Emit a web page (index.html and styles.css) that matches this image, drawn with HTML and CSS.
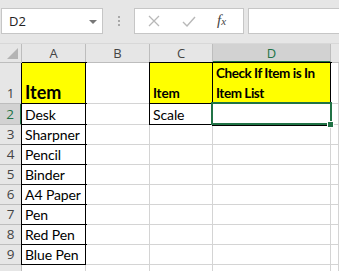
FILE: index.html
```html
<!DOCTYPE html>
<html>
<head>
<meta charset="utf-8">
<link rel="stylesheet" href="styles.css">
</head>
<body>
<div class="app">
  <div class="toolbar">
    <div class="namebox"><span class="ref">D2</span><span class="drop"></span></div>
    <div class="dots"><i></i><i></i><i></i></div>
    <div class="fbtns">
      <svg class="ico-x" width="12" height="12" viewBox="0 0 12 12"><path d="M1 1L11 11M11 1L1 11" stroke="#b8b8b8" stroke-width="1.3" fill="none"/></svg>
      <svg class="ico-ok" width="14" height="11" viewBox="0 0 14 11"><path d="M1 6L5 10L13 1" stroke="#b8b8b8" stroke-width="1.4" fill="none"/></svg>
      <span class="fx">f<span class="fxx">x</span></span>
    </div>
    <div class="formula"></div>
  </div>
  <div class="sheet">
    <div class="corner"><span class="tri"></span></div>
    <div class="ch">A</div>
    <div class="ch">B</div>
    <div class="ch">C</div>
    <div class="ch sel">D</div>
    <div class="ch last"></div>

    <div class="rh">1</div>
    <div class="c y b big">Item</div>
    <div class="c"></div>
    <div class="c y b hd">Item</div>
    <div class="c y b hd wrap">Check If Item is In Item List</div>
    <div class="c"></div>

    <div class="rh sel">2</div>
    <div class="c b">Desk</div>
    <div class="c"></div>
    <div class="c b">Scale</div>
    <div class="c b active"><span class="handle"></span></div>
    <div class="c"></div>

    <div class="rh">3</div><div class="c b">Sharpner</div><div class="c"></div><div class="c"></div><div class="c"></div><div class="c"></div>
    <div class="rh">4</div><div class="c b">Pencil</div><div class="c"></div><div class="c"></div><div class="c"></div><div class="c"></div>
    <div class="rh">5</div><div class="c b">Binder</div><div class="c"></div><div class="c"></div><div class="c"></div><div class="c"></div>
    <div class="rh">6</div><div class="c b">A4 Paper</div><div class="c"></div><div class="c"></div><div class="c"></div><div class="c"></div>
    <div class="rh">7</div><div class="c b">Pen</div><div class="c"></div><div class="c"></div><div class="c"></div><div class="c"></div>
    <div class="rh">8</div><div class="c b">Red Pen</div><div class="c"></div><div class="c"></div><div class="c"></div><div class="c"></div>
    <div class="rh">9</div><div class="c b">Blue Pen</div><div class="c"></div><div class="c"></div><div class="c"></div><div class="c"></div>
    <div class="rh"></div><div class="c"></div><div class="c"></div><div class="c"></div><div class="c"></div><div class="c"></div>
  </div>
</div>
</body>
</html>
```

FILE: styles.css
```css
* { box-sizing: border-box; }
html, body { margin: 0; padding: 0; }
body {
  width: 339px;
  height: 271px;
  overflow: hidden;
  background: #ffffff;
  font-family: "Lato", "Noto Sans", sans-serif;
}
.app { width: 339px; height: 271px; overflow: hidden; }

.toolbar {
  height: 44px;
  background: #e6e6e6;
  display: flex;
  align-items: flex-start;
  padding-top: 8px;
  padding-left: 1px;
}
.namebox {
  width: 102px;
  height: 26px;
  background: #fff;
  border: 1px solid #c6c6c6;
  display: flex;
  align-items: center;
  justify-content: space-between;
  padding: 0 5px 0 7px;
}
.ref {
  font-family: "Open Sans", "Noto Sans", sans-serif;
  font-size: 13px;
  color: #222;
}
.drop {
  width: 0; height: 0;
  border-left: 4px solid transparent;
  border-right: 4px solid transparent;
  border-top: 4px solid #777;
  margin-top: 1px;
}
.dots {
  width: 31px;
  height: 26px;
  display: flex;
  flex-direction: column;
  align-items: center;
  justify-content: center;
  gap: 2px;
}
.dots i { display: block; width: 2px; height: 2px; background: #a8a8a8; }
.fbtns {
  width: 110px;
  height: 26px;
  background: #fff;
  border: 1px solid #c6c6c6;
  display: flex;
  align-items: center;
  padding-left: 13px;
}
.ico-x { margin-right: 22px; }
.ico-ok { margin-right: 21px; }
.fx {
  font-family: "Liberation Serif", "DejaVu Serif", serif;
  font-style: italic;
  font-size: 15px;
  color: #444;
  margin-top: -2px;
}
.fxx { font-size: 11px; }
.formula {
  flex: 1;
  margin-left: 4px;
  height: 26px;
  background: #fff;
  border: 1px solid #c6c6c6;
  border-right: none;
}

.sheet {
  display: grid;
  grid-template-columns: 22px 64px 64px 63px 118px 1fr;
  grid-template-rows: 19px 41px 21px repeat(8, 20px);
  border-top: 1px solid #d8d8d8;
  margin-top: -1px;
}
.corner {
  background: #e6e6e6;
  border-right: 1px solid #bdbdbd;
  border-bottom: 1px solid #bdbdbd;
  position: relative;
}
.tri {
  position: absolute;
  right: 3px;
  bottom: 3px;
  width: 0; height: 0;
  border-left: 11px solid transparent;
  border-bottom: 11px solid #b4b4b4;
}
.ch {
  background: #e6e6e6;
  border-right: 1px solid #bdbdbd;
  border-bottom: 1px solid #bdbdbd;
  font-family: "Open Sans", "Noto Sans", sans-serif;
  font-size: 13px;
  color: #444;
  text-align: center;
  line-height: 18px;
}
.ch.sel {
  background: #d2d2d2;
  color: #217346;
  border-bottom: 2px solid #217346;
}
.ch.last { border-right: none; }
.rh {
  background: #e6e6e6;
  border-right: 1px solid #bdbdbd;
  border-bottom: 1px solid #bdbdbd;
  font-family: "Open Sans", "Noto Sans", sans-serif;
  font-size: 13.5px;
  color: #444;
  display: flex;
  align-items: flex-end;
  justify-content: center;
  line-height: 19px;
}
.rh.sel {
  background: #d2d2d2;
  color: #217346;
  border-right: 2px solid #217346;
}
.c {
  background: #fff;
  border-right: 1px solid #d4d4d4;
  border-bottom: 1px solid #d4d4d4;
  font-size: 14px;
  letter-spacing: -0.1px;
  color: #000;
  padding: 0 3px;
  display: flex;
  align-items: flex-end;
  line-height: 19px;
  white-space: nowrap;
}
.c.y { background: #ffff00; }
.c.b {
  border-right-color: #000;
  border-bottom-color: #000;
  box-shadow: 0 0 0 1px #000;
}
.big {
  font-weight: 700;
  font-size: 18px;
  line-height: 22px;
  letter-spacing: 0;
}
.hd { font-weight: 700; font-size: 13.5px; letter-spacing: -0.2px; }
.wrap {
  white-space: normal;
  line-height: 20px;
  align-items: flex-end;
  padding-right: 0;
  letter-spacing: -0.45px;
}
.active { position: relative; overflow: visible; }
.active::after {
  content: "";
  position: absolute;
  left: -2px;
  top: -2px;
  right: -2px;
  bottom: -1px;
  border: 2px solid #217346;
}
.handle {
  position: absolute;
  right: -4px;
  bottom: -4px;
  width: 7px;
  height: 7px;
  background: #217346;
  border: 1px solid #fff;
  z-index: 2;
}
```
